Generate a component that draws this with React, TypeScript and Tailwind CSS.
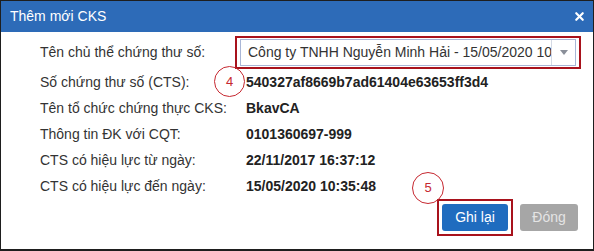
import { X } from "lucide-react";

const rows = [
  { label: "Số chứng thư số (CTS):", value: "540327af8669b7ad61404e63653ff3d4" },
  { label: "Tên tổ chức chứng thực CKS:", value: "BkavCA" },
  { label: "Thông tin ĐK với CQT:", value: "0101360697-999" },
  { label: "CTS có hiệu lực từ ngày:", value: "22/11/2017 16:37:12" },
  { label: "CTS có hiệu lực đến ngày:", value: "15/05/2020 10:35:48" },
];

function Marker({ n, className }: { n: number; className: string }) {
  return (
    <div
      className={`absolute flex items-center justify-center rounded-full border-[1.5px] border-[#c62830] text-[13px] text-[#c62830] ${className}`}
    >
      {n}
    </div>
  );
}

export default function App() {
  return (
    <div className="relative h-[251px] w-[594px] overflow-hidden border border-b-2 border-[#1e1e1e] bg-white font-['Liberation_Sans',Arial,sans-serif] text-[14px] text-[#333]">
      <div className="flex h-[31px] items-center justify-between bg-[#2d6bb8] pl-[9px] pr-[7px] text-white">
        <span className="text-[14px]">Thêm mới CKS</span>
        <X className="h-[13px] w-[13px]" strokeWidth={4} />
      </div>

      <div className="pl-[39px] pt-[3px]">
        <div className="flex h-[34px] items-center">
          <div className="w-[195px]">Tên chủ thể chứng thư số:</div>
          <div className="border-2 border-[#a8121c] px-[3px] py-[1px]">
            <div className="flex h-[27px] w-[336px] items-center border border-[#a9b6d6] bg-white">
              <div className="flex-1 overflow-hidden whitespace-nowrap pl-[7px]">
                Công ty TNHH Nguyễn Minh Hải - 15/05/2020 10:35:48
              </div>
              <div className="flex h-full w-[24px] items-center justify-center border-l border-[#d4d9e4]">
                <svg width="8" height="5" viewBox="0 0 8 5">
                  <path d="M0 0h8L4 5z" fill="#8a8f99" />
                </svg>
              </div>
            </div>
          </div>
        </div>

        <div className="grid grid-cols-[206px_1fr]">
          {rows.map((r) => (
            <div key={r.label} className="contents">
              <div className="flex h-[26px] items-center">{r.label}</div>
              <div className="flex h-[26px] items-center font-bold text-[#222]">{r.value}</div>
            </div>
          ))}
        </div>
      </div>

      <div className="flex items-center justify-end gap-[7px] pr-[15px]">
        <div className="border-2 border-[#a8121c] p-[3px]">
          <button className="h-[27px] w-[66px] rounded-[3px] bg-[#1f6cbf] text-white">Ghi lại</button>
        </div>
        <button className="h-[27px] w-[58px] rounded-[3px] bg-[#a6a6a6] text-[#e4e4e4]">Đóng</button>
      </div>

      <Marker n={4} className="left-[213px] top-[65px] h-[31px] w-[31px]" />
      <Marker n={5} className="left-[411px] top-[171px] h-[32px] w-[32px]" />
    </div>
  );
}
